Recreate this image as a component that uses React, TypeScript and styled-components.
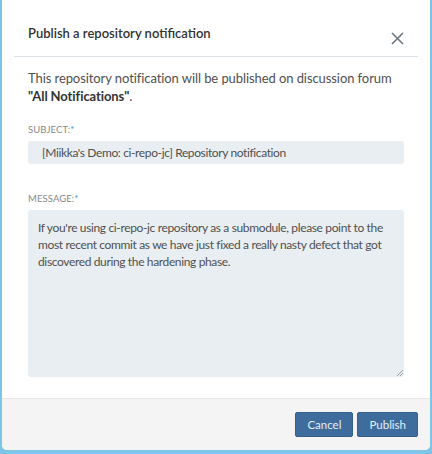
import React from "react";
import styled, { createGlobalStyle } from "styled-components";

const Global = createGlobalStyle`
  html, body { margin: 0; padding: 0; background: #7ec4e6; }
  body { font-family: "Lato", "Open Sans", sans-serif; }
  * { box-sizing: border-box; }
`;

const Page = styled.div`
  width: 432px;
  height: 454px;
  padding: 0 2px 4px 2px;
  background: #7ec4e6;
`;

const Dialog = styled.div`
  height: 450px;
  background: #fff;
  border-radius: 0 0 5px 5px;
  display: flex;
  flex-direction: column;
  overflow: hidden;
`;

const Header = styled.div`
  margin: 0 12px;
  height: 57px;
  border-bottom: 1px solid #dde3e7;
  display: flex;
  align-items: flex-end;
  justify-content: space-between;
  padding: 0 14px 11px 14px;
`;

const Title = styled.h1`
  margin: 0 0 3px 0;
  font-size: 13px;
  line-height: 17px;
  font-weight: 600;
  color: #333;
`;

const Close = styled.button`
  border: 0;
  background: none;
  padding: 0;
  width: 13px;
  height: 13px;
  display: flex;
`;

const Body = styled.div`
  flex: 1;
  padding: 12px 26px 20px 26px;
  display: flex;
  flex-direction: column;
`;

const Intro = styled.p`
  margin: 0;
  font-size: 13px;
  letter-spacing: -0.08px;
  line-height: 18px;
  color: #505050;
  b { font-weight: 700; color: #333; }
`;

const Label = styled.label<{ $top: number }>`
  display: block;
  margin-top: ${(p) => p.$top}px;
  font-size: 9.5px;
  color: #888;
  letter-spacing: 0.1px;
  line-height: 12px;
  span { color: #3a8fd0; }
`;

const Input = styled.div`
  margin-top: 5px;
  height: 23px;
  background: #e8eef1;
  border-radius: 3px;
  padding: 0 12px 0 14px;
  font-size: 12px;
  letter-spacing: -0.38px;
  color: #505050;
  display: flex;
  align-items: center;
`;

const TextArea = styled.div`
  position: relative;
  margin-top: 5px;
  height: 167px;
  background: #e8eef1;
  border-radius: 3px;
  padding: 9px 10px;
  font-size: 12px;
  letter-spacing: -0.36px;
  line-height: 17px;
  color: #505050;
`;

const Grip = styled.svg`
  position: absolute;
  right: 1px;
  bottom: 1px;
`;

const Footer = styled.div`
  height: 52px;
  background: #f4f4f4;
  border-top: 1px solid #e6e6e6;
  display: flex;
  justify-content: flex-end;
  align-items: center;
  gap: 4px;
  padding: 0 12px 0 0;
`;

const Button = styled.button`
  height: 25px;
  padding: 0 11px;
  background: #3e6c9c;
  color: #e4eef8;
  border: 1px solid #35608c;
  border-radius: 2px;
  font-family: "Lato", "Open Sans", sans-serif;
  font-size: 11.5px;
`;

export default function App() {
  return (
    <Page>
      <Global />
      <Dialog>
        <Header>
          <Title>Publish a repository notification</Title>
          <Close aria-label="Close">
            <svg width="13" height="13" viewBox="0 0 13 13">
              <path d="M1 1 L12 12 M12 1 L1 12" stroke="#6b7680" strokeWidth="1.6" fill="none" />
            </svg>
          </Close>
        </Header>
        <Body>
          <Intro>
            This repository notification will be published on discussion forum
            <br />
            <b>"All Notifications"</b>.
          </Intro>
          <Label $top={19}>
            SUBJECT:<span>*</span>
          </Label>
          <Input>[Miikka's Demo: ci-repo-jc] Repository notification</Input>
          <Label $top={29}>
            MESSAGE:<span>*</span>
          </Label>
          <TextArea>
            If you're using ci-repo-jc repository as a submodule, please point to the most recent
            commit as we have just fixed a really nasty defect that got discovered during the
            hardening phase.
            <Grip width="7" height="7" viewBox="0 0 7 7">
              <path d="M7 1 L1 7 M7 4 L4 7" stroke="#888" strokeWidth="0.8" />
            </Grip>
          </TextArea>
        </Body>
        <Footer>
          <Button>Cancel</Button>
          <Button>Publish</Button>
        </Footer>
      </Dialog>
    </Page>
  );
}
